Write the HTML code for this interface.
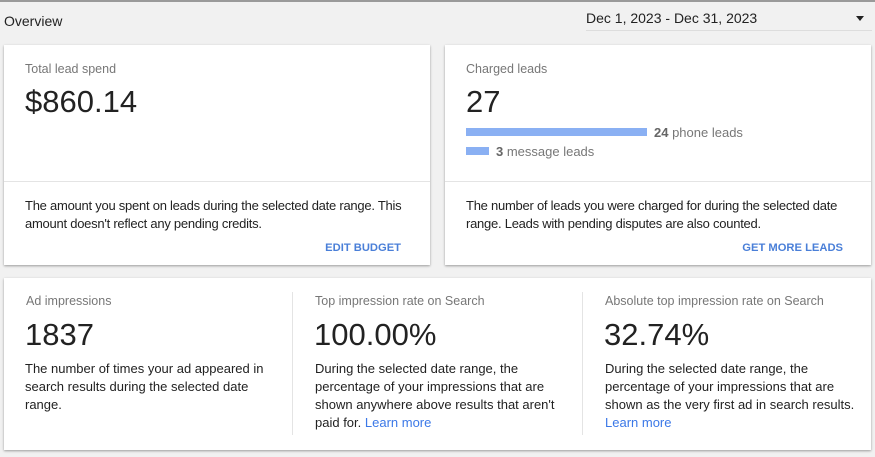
<!DOCTYPE html>
<html><head><meta charset="utf-8"><style>
*{margin:0;padding:0;box-sizing:border-box}
body{width:875px;height:457px;background:#f1f1f1;font-family:"Liberation Sans",Arial,sans-serif;color:#212121;position:relative;overflow:hidden}
.a{position:absolute;white-space:nowrap}
.card{position:absolute;background:#fff;box-shadow:0 1px 2px rgba(0,0,0,.25),0 1px 3px rgba(0,0,0,.12)}
.lbl{font-size:12.5px;color:#777}
.big{font-size:31px;color:#222;letter-spacing:0}
.txt{font-size:13px;line-height:18px;color:#222;white-space:normal}
.lnk{color:#3b78e7}
.btn{font-size:11.2px;color:#4a7fd8;font-weight:bold;letter-spacing:0}
.bar{position:absolute;height:8px;background:#8ab0f3}
</style></head><body>
<div class="a" style="left:0;top:0;width:875px;height:2px;background:#9a9a9a"></div>
<div class="a" style="left:4px;top:13px;font-size:14px;color:#222">Overview</div>
<div class="a" style="left:586px;top:10px;font-size:14px;color:#222">Dec 1, 2023 - Dec 31, 2023</div>
<div class="a" style="left:856px;top:16px;width:0;height:0;border-left:4.5px solid transparent;border-right:4.5px solid transparent;border-top:5px solid #222"></div>
<div class="a" style="left:586px;top:30px;width:286px;height:1px;background:#ddd"></div>

<div class="card" style="left:4px;top:45px;width:426px;height:220px">
 <div class="a lbl" style="left:21px;top:17px">Total lead spend</div>
 <div class="a big" style="left:21px;top:39px">$860.14</div>
 <div class="a" style="left:0;top:136px;width:426px;height:1px;background:#e4e4e4"></div>
 <div class="a txt" style="left:21px;top:152px;width:400px;letter-spacing:-0.25px">The amount you spent on leads during the selected date range. This amount doesn't reflect any pending credits.</div>
 <div class="a btn" style="right:29px;top:197px">EDIT BUDGET</div>
</div>

<div class="card" style="left:445px;top:45px;width:426px;height:220px">
 <div class="a lbl" style="left:21px;top:17px">Charged leads</div>
 <div class="a big" style="left:21px;top:39px">27</div>
 <div class="bar" style="left:21px;top:83px;width:181px"></div>
 <div class="a" style="left:209px;top:80px;font-size:13px;color:#777"><b style="color:#666">24</b> phone leads</div>
 <div class="bar" style="left:21px;top:102px;width:23px"></div>
 <div class="a" style="left:51px;top:99px;font-size:13px;color:#777"><b style="color:#666">3</b> message leads</div>
 <div class="a" style="left:0;top:136px;width:426px;height:1px;background:#e4e4e4"></div>
 <div class="a txt" style="left:21px;top:152px;width:395px;letter-spacing:-0.25px">The number of leads you were charged for during the selected date range. Leads with pending disputes are also counted.</div>
 <div class="a btn" style="right:28px;top:197px">GET MORE LEADS</div>
</div>

<div class="card" style="left:4px;top:278px;width:867px;height:172px">
 <div class="a lbl" style="left:22px;top:16px">Ad impressions</div>
 <div class="a big" style="left:21px;top:39px">1837</div>
 <div class="a txt" style="left:21px;top:82px;width:250px">The number of times your ad appeared in search results during the selected date range.</div>
 <div class="a" style="left:288px;top:14px;width:1px;height:143px;background:#e4e4e4"></div>
 <div class="a lbl" style="left:311px;top:16px">Top impression rate on Search</div>
 <div class="a big" style="left:310px;top:39px">100.00%</div>
 <div class="a txt" style="left:311px;top:82px;width:250px">During the selected date range, the percentage of your impressions that are shown anywhere above results that aren't paid for. <span class="lnk">Learn more</span></div>
 <div class="a" style="left:578px;top:14px;width:1px;height:143px;background:#e4e4e4"></div>
 <div class="a lbl" style="left:601px;top:16px">Absolute top impression rate on Search</div>
 <div class="a big" style="left:600px;top:39px">32.74%</div>
 <div class="a txt" style="left:601px;top:82px;width:255px">During the selected date range, the percentage of your impressions that are shown as the very first ad in search results. <span class="lnk">Learn more</span></div>
</div>
</body></html>
